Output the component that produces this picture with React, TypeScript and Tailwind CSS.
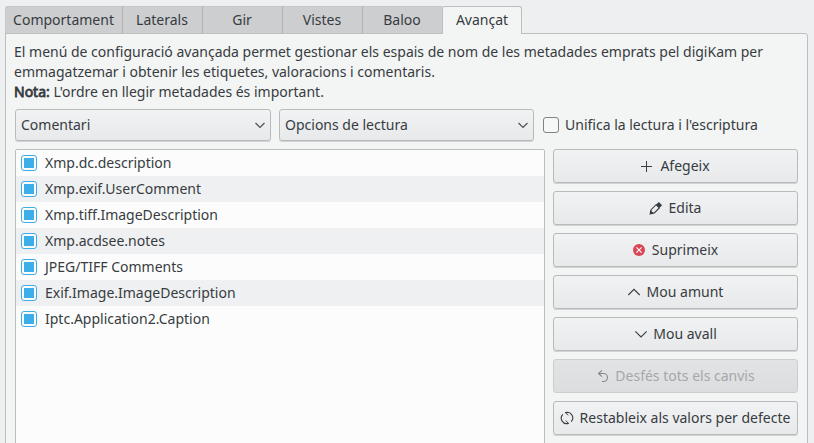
import type { ReactNode } from "react";

const tabs = [
  { label: "Comportament", width: "w-[117px]" },
  { label: "Laterals", width: "w-[80px]" },
  { label: "Gir", width: "w-[80px]" },
  { label: "Vistes", width: "w-[80px]" },
  { label: "Baloo", width: "w-[80px]" },
];

const entries = [
  "Xmp.dc.description",
  "Xmp.exif.UserComment",
  "Xmp.tiff.ImageDescription",
  "Xmp.acdsee.notes",
  "JPEG/TIFF Comments",
  "Exif.Image.ImageDescription",
  "Iptc.Application2.Caption",
];

function Icon({ children }: { children: ReactNode }) {
  return (
    <svg width="16" height="16" viewBox="0 0 16 16" fill="none" stroke="currentColor" strokeWidth="1.1" className="shrink-0">
      {children}
    </svg>
  );
}

const actions: { label: string; icon: ReactNode; disabled?: boolean }[] = [
  { label: "Afegeix", icon: <path d="M7.5 3v11M2 8.5h11" strokeWidth="1" /> },
  {
    label: "Edita",
    icon: (
      <>
        <path d="M2.5 13.5l.6-3.8 5-5 3.2 3.2-5 5z" />
        <path d="M8 4.7L10.8 1.9l3.3 3.3-2.8 2.8z" fill="currentColor" stroke="none" />
        <path d="M2.2 13.8l.5-2.6 2.1 2.1z" fill="currentColor" />
      </>
    ),
  },
  {
    label: "Suprimeix",
    icon: (
      <>
        <circle cx="8" cy="8" r="6" fill="#da4453" stroke="none" />
        <path d="M5.4 5.4l5.2 5.2M10.6 5.4l-5.2 5.2" stroke="#fcfcfc" strokeWidth="1.2" />
      </>
    ),
  },
  { label: "Mou amunt", icon: <path d="M2.3 11L8 5.3l5.7 5.7" /> },
  { label: "Mou avall", icon: <path d="M3.3 5.3L9 11l5.7-5.7" /> },
  {
    label: "Desfés tots els canvis",
    disabled: true,
    icon: <path d="M8 2.3L4.5 5.5 8 8.7M4.5 5.5h5a4 4 0 0 1 0 8H8" stroke="#85888b" />,
  },
  {
    label: "Restableix als valors per defecte",
    icon: (
      <>
        <path d="M6.5 2.6A5.5 5.5 0 0 1 12.2 11.6M9.5 13.4A5.5 5.5 0 0 1 3.8 4.4" />
        <path d="M9.2 5.4L6.4 2.6H9.6M6.8 10.6L9.6 13.4H6.4" strokeWidth="1" />
      </>
    ),
  },
];

function Combo({ label, width }: { label: string; width: string }) {
  return (
    <div className={`${width} flex h-8 items-center justify-between rounded-[3px] border border-[#b8babc] bg-linear-to-b from-[#f1f2f3] to-[#e8e9ea] pr-[4px] pl-[5px] shadow-[0_1px_0_#d0d2d3]`}>
      <span>{label}</span>
      <svg width="12" height="12" viewBox="0 0 12 12" fill="none" stroke="#4d5154" strokeWidth="1.2">
        <path d="M1.5 4L6 8.5 10.5 4" />
      </svg>
    </div>
  );
}

export default function App() {
  return (
    <div className="flex h-[443px] w-[814px] flex-col overflow-hidden bg-[#eeeff0] pt-[6px] pr-[6px] pl-[5px] font-['Noto_Sans',sans-serif] text-[14px] leading-[20px] whitespace-nowrap text-[#373c41]">
      <div className="z-10 flex h-[28px] shrink-0">
        {tabs.map((tab, i) => (
          <div
            key={tab.label}
            className={`${tab.width} flex h-[28px] items-center justify-center border-t border-b border-l border-t-[#c4c6c8] border-b-[#bcbec0] bg-[#cdced0] pr-px ${i === 0 ? "rounded-tl-[3px] border-l-[#c4c6c8]" : "border-l-[#b0b2b4]"}`}
          >
            {tab.label}
          </div>
        ))}
        <div className="flex h-[28px] w-[80px] items-center justify-center rounded-t-[3px] border-x border-t border-[#bcbec0] bg-[#f3f4f4] pb-px">
          Avançat
        </div>
      </div>
      <div className="-mt-px flex h-[420px] shrink-0 flex-col rounded-tr-[3px] border border-[#bcbec0] bg-[#f3f4f4] pt-[8px] pr-[9px] pl-[9px]">
        <div className="-ml-px">
          <p>El menú de configuració avançada permet gestionar els espais de nom de les metadades emprats pel digiKam per</p>
          <p>emmagatzemar i obtenir les etiquetes, valoracions i comentaris.</p>
          <p>
            <b className="font-normal [-webkit-text-stroke:0.8px_#373c41]">Nota:</b> L'ordre en llegir metadades és important.
          </p>
        </div>
        <div className="mt-[7px] flex h-8 shrink-0 items-center">
          <Combo label="Comentari" width="w-[256px]" />
          <div className="w-2" />
          <Combo label="Opcions de lectura" width="w-[255px]" />
          <div className="ml-[9px] size-4 rounded-[3px] border border-[#7f8386] bg-[#f6f7f7]" />
          <span className="ml-[6px]">Unifica la lectura i l'escriptura</span>
        </div>
        <div className="mt-2 flex gap-2">
          <div className="h-[320px] w-[530px] rounded-t-[2px] border border-[#bcbec0] bg-[#fcfcfc]">
            {entries.map((entry) => (
              <div key={entry} className="flex h-[26px] items-center pl-[5px] even:bg-[#eff0f1]">
                <div className="flex size-4 items-center justify-center rounded-[3px] border border-[#3daee9] bg-[#fcfcfc]">
                  <div className="size-[10px] bg-[#3daee9]" />
                </div>
                <span className="ml-2">{entry}</span>
              </div>
            ))}
          </div>
          <div className="flex w-[245px] flex-col gap-2">
            {actions.map((action) => (
              <div
                key={action.label}
                className={`flex h-[34px] items-center justify-center gap-[5px] rounded-[3px] border pr-[2px] ${
                  action.disabled
                    ? "border-[#cbcdce] bg-linear-to-b from-[#e2e3e4] to-[#dcddde] text-[#a5a7a9]"
                    : "border-[#b8babc] bg-linear-to-b from-[#f1f2f3] to-[#e8e9ea] shadow-[0_1px_0_#d0d2d3]"
                }`}
              >
                <Icon>{action.icon}</Icon>
                <span>{action.label}</span>
              </div>
            ))}
          </div>
        </div>
      </div>
    </div>
  );
}
